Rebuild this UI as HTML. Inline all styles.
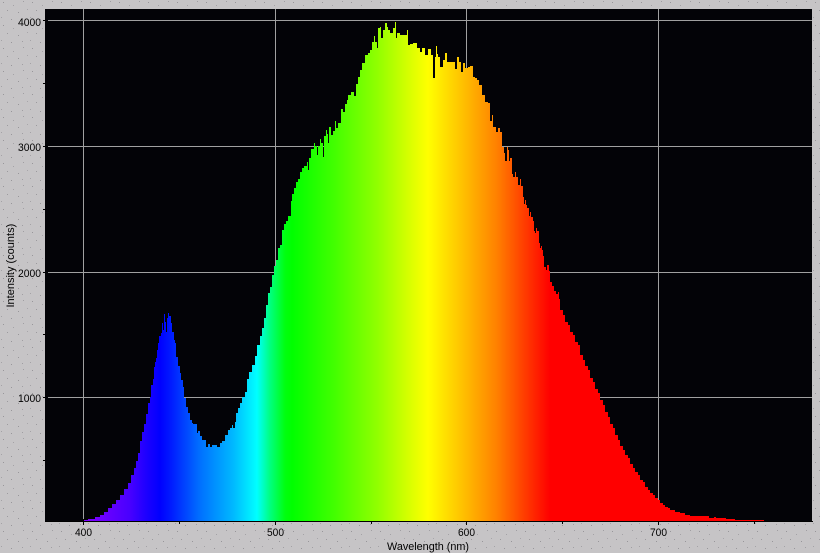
<!DOCTYPE html>
<html>
<head>
<meta charset="utf-8">
<style>
html,body{margin:0;padding:0;width:820px;height:553px;overflow:hidden;background:#c6c4c6}
svg{display:block}
text{font-family:"Liberation Sans",sans-serif;font-size:11px;fill:#000}
</style>
</head>
<body>
<svg width="820" height="553" viewBox="0 0 820 553" xmlns="http://www.w3.org/2000/svg">
<defs>
<pattern id="tex" width="29" height="23" patternUnits="userSpaceOnUse">
<rect x="3" y="2" width="1" height="1" fill="#98969a"/>
<rect x="13" y="5" width="1" height="1" fill="#a4a2a6"/>
<rect x="23" y="1" width="1" height="1" fill="#a09ea2"/>
<rect x="7" y="10" width="1" height="1" fill="#9c9a9e"/>
<rect x="18" y="12" width="1" height="1" fill="#98969a"/>
<rect x="27" y="9" width="1" height="1" fill="#a8a6aa"/>
<rect x="1" y="17" width="1" height="1" fill="#a4a2a6"/>
<rect x="11" y="19" width="1" height="1" fill="#98969a"/>
<rect x="22" y="18" width="1" height="1" fill="#a09ea2"/>
</pattern>
<linearGradient id="spectrum" gradientUnits="userSpaceOnUse" x1="0" y1="0" x2="1000" y2="0">
<stop offset="0.085" stop-color="#8000ff"/>
<stop offset="0.100" stop-color="#7000ff"/>
<stop offset="0.130" stop-color="#4800ff"/>
<stop offset="0.145" stop-color="#2000ff"/>
<stop offset="0.160" stop-color="#0000ff"/>
<stop offset="0.170" stop-color="#0018ff"/>
<stop offset="0.200" stop-color="#0070ff"/>
<stop offset="0.233" stop-color="#00b8ff"/>
<stop offset="0.257" stop-color="#00ffff"/>
<stop offset="0.270" stop-color="#00ff80"/>
<stop offset="0.285" stop-color="#00ff10"/>
<stop offset="0.292" stop-color="#00ff00"/>
<stop offset="0.333" stop-color="#40ff00"/>
<stop offset="0.377" stop-color="#90ff00"/>
<stop offset="0.413" stop-color="#e0ff00"/>
<stop offset="0.428" stop-color="#ffff00"/>
<stop offset="0.463" stop-color="#ffc000"/>
<stop offset="0.497" stop-color="#ff8000"/>
<stop offset="0.523" stop-color="#ff4000"/>
<stop offset="0.550" stop-color="#ff0000"/>
<stop offset="1" stop-color="#ff0000"/>
</linearGradient>
</defs>
<rect width="820" height="553" fill="#c6c4c6"/>
<rect width="820" height="553" fill="url(#tex)"/>
<rect x="45" y="9" width="767" height="512" fill="#030307"/>
<g fill="#a0a0a0" shape-rendering="crispEdges">
<rect x="48" y="20" width="764" height="1"/>
<rect x="48" y="146" width="764" height="1"/>
<rect x="48" y="272" width="764" height="1"/>
<rect x="48" y="397" width="764" height="1"/>
<rect x="83" y="9" width="1" height="510"/>
<rect x="275" y="9" width="1" height="510"/>
<rect x="466" y="9" width="1" height="510"/>
<rect x="658" y="9" width="1" height="510"/>
</g>
<path shape-rendering="crispEdges" fill="url(#spectrum)" d="M84 521 V520 H88 V519 H95 V517 H100 V515 H104 V512 H108 V508 H112 V504 H116 V500 H120 V495 H124 V489 H128 V483 H131 V475 H134 V468 H136 V461 H138 V453 H140 V441 H142 V432 H144 V424 H146 V414 H148 V403 H150 V397 H151 V385 H153 V379 H154 V367 H155 V362 H156 V358 H157 V350 H158 V343 H159 V336 H161 V333 H162 V323 H163 V330 H164 V314 H165 V322 H166 V332 H167 V318 H168 V313 H169 V316 H171 V323 H172 V332 H174 V340 H175 V343 H176 V357 H178 V366 H180 V373 H181 V380 H183 V387 H184 V398 H186 V407 H188 V413 H190 V420 H192 V423 H193 V424 H197 V433 H198 V431 H200 V436 H202 V440 H206 V447 H208 V444 H210 V447 H212 V445 H217 V447 H220 V443 H222 V441 H225 V435 H228 V430 H230 V428 H232 V425 H233 V428 H235 V422 H236 V413 H238 V408 H240 V403 H242 V397 H245 V392 H247 V379 H249 V372 H252 V365 H255 V356 H257 V345 H260 V336 H262 V328 H264 V318 H266 V305 H268 V293 H270 V287 H272 V275 H274 V266 H276 V260 H278 V248 H280 V245 H282 V230 H284 V224 H286 V221 H288 V216 H291 V201 H292 V194 H294 V188 H296 V182 H298 V179 H300 V172 H302 V168 H304 V166 H307 V162 H308 V170 H309 V158 H311 V149 H314 V143 H315 V146 H317 V155 H318 V146 H320 V139 H321 V143 H323 V157 H324 V136 H326 V130 H327 V134 H328 V143 H329 V127 H331 V135 H333 V131 H335 V121 H336 V128 H338 V123 H341 V109 H343 V112 H345 V104 H347 V100 H348 V95 H351 V92 H354 V96 H356 V84 H358 V77 H360 V70 H362 V63 H365 V55 H368 V53 H370 V50 H372 V42 H374 V36 H375 V42 H377 V48 H378 V28 H380 V27 H381 V38 H383 V30 H385 V23 H387 V27 H388 V30 H390 V33 H393 V28 H395 V22 H396 V38 H397 V33 H400 V35 H407 V30 H408 V45 H410 V44 H413 V43 H417 V48 H420 V52 H422 V48 H425 V55 H428 V49 H431 V55 H433 V78 H435 V57 H436 V46 H437 V54 H438 V57 H440 V67 H443 V60 H445 V53 H447 V62 H455 V69 H457 V57 H459 V62 H461 V72 H463 V63 H465 V68 H468 V67 H470 V66 H473 V77 H475 V78 H477 V80 H479 V85 H482 V95 H485 V102 H488 V103 H490 V121 H492 V115 H493 V127 H496 V132 H498 V128 H500 V132 H502 V147 H504 V153 H505 V161 H507 V147 H508 V150 H509 V161 H510 V158 H512 V174 H513 V177 H515 V172 H516 V177 H518 V185 H520 V179 H521 V186 H523 V197 H524 V204 H525 V200 H526 V205 H527 V208 H529 V216 H530 V212 H531 V217 H533 V221 H534 V231 H535 V233 H536 V228 H537 V231 H539 V243 H540 V248 H541 V246 H542 V250 H543 V256 H544 V267 H546 V270 H547 V265 H549 V271 H550 V282 H552 V286 H554 V291 H556 V294 H558 V292 H559 V299 H560 V310 H563 V315 H565 V322 H568 V325 H570 V332 H573 V335 H575 V342 H578 V345 H580 V355 H583 V360 H585 V366 H588 V370 H590 V378 H593 V382 H595 V389 H598 V393 H600 V400 H603 V405 H605 V412 H608 V417 H610 V424 H613 V428 H615 V435 H618 V440 H620 V446 H623 V450 H625 V455 H628 V458 H630 V464 H633 V468 H635 V472 H638 V475 H640 V480 H643 V482 H645 V487 H648 V490 H650 V493 H653 V495 H655 V498 H658 V500 H660 V503 H663 V505 H665 V507 H668 V508 H670 V510 H675 V512 H680 V513 H685 V515 H690 V516 H709 V518 H714 V517 H716 V518 H726 V519 H735 V520 H749 V520 H764 V521 Z"/>
<g fill="#000" shape-rendering="crispEdges">
<rect x="45" y="521" width="768" height="1"/>
<rect x="43" y="20" width="2" height="1"/>
<rect x="43" y="83" width="2" height="1"/>
<rect x="43" y="146" width="2" height="1"/>
<rect x="43" y="209" width="2" height="1"/>
<rect x="43" y="272" width="2" height="1"/>
<rect x="43" y="334" width="2" height="1"/>
<rect x="43" y="397" width="2" height="1"/>
<rect x="43" y="460" width="2" height="1"/>
<rect x="83" y="522" width="1" height="3"/>
<rect x="179" y="522" width="1" height="2"/>
<rect x="275" y="522" width="1" height="3"/>
<rect x="371" y="522" width="1" height="2"/>
<rect x="466" y="522" width="1" height="3"/>
<rect x="562" y="522" width="1" height="2"/>
<rect x="658" y="522" width="1" height="3"/>
<rect x="754" y="522" width="1" height="2"/>
</g>
<g>
<text x="18" y="26" textLength="23" lengthAdjust="spacingAndGlyphs">4000</text>
<text x="18" y="151" textLength="23" lengthAdjust="spacingAndGlyphs">3000</text>
<text x="18" y="277" textLength="23" lengthAdjust="spacingAndGlyphs">2000</text>
<text x="18" y="402" textLength="23" lengthAdjust="spacingAndGlyphs">1000</text>
<text x="75" y="536" textLength="17" lengthAdjust="spacingAndGlyphs">400</text>
<text x="267" y="536" textLength="17" lengthAdjust="spacingAndGlyphs">500</text>
<text x="458" y="536" textLength="17" lengthAdjust="spacingAndGlyphs">600</text>
<text x="650" y="536" textLength="17" lengthAdjust="spacingAndGlyphs">700</text>
<text x="387" y="550" textLength="82" lengthAdjust="spacingAndGlyphs">Wavelength (nm)</text>
</g>
<text transform="translate(14 307.5) rotate(-90)">Intensity (counts)</text>
</svg>
</body>
</html>
